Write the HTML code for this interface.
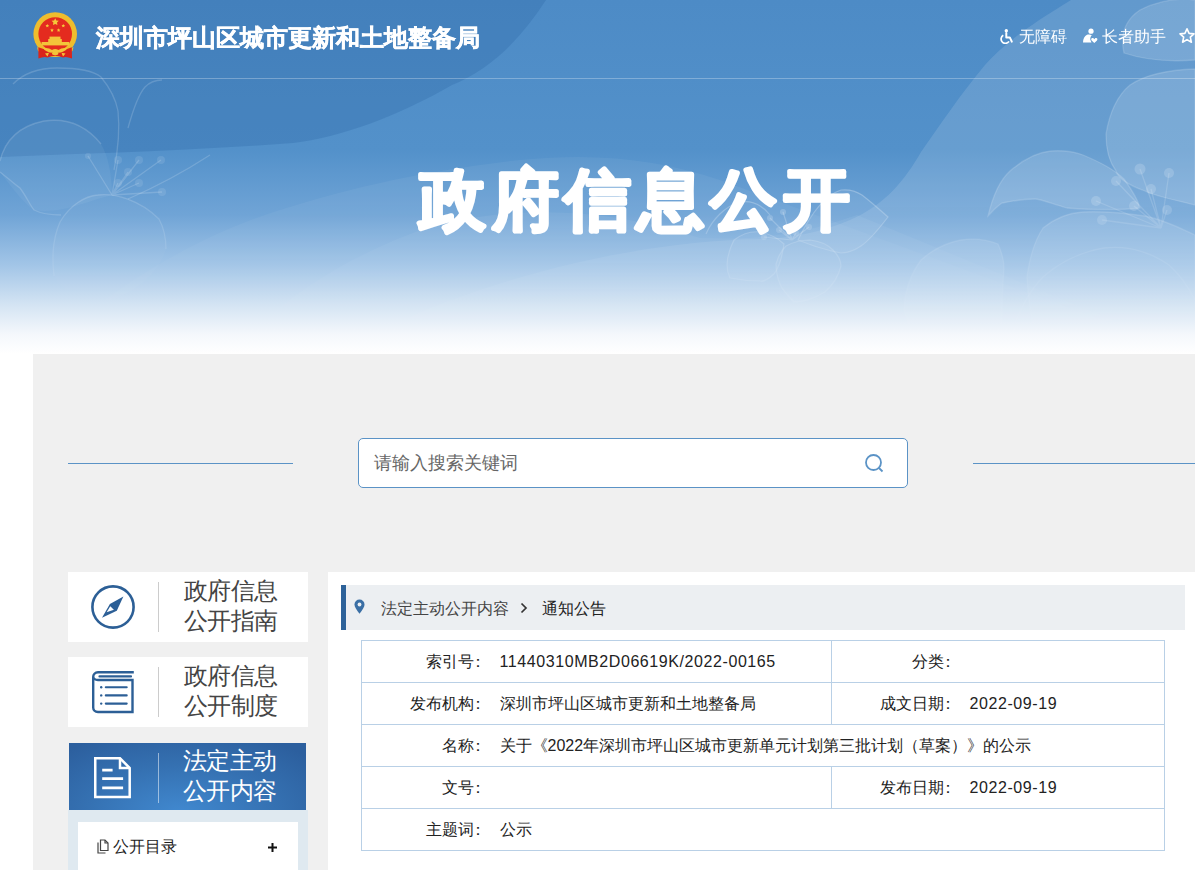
<!DOCTYPE html>
<html><head><meta charset="utf-8">
<style>
*{margin:0;padding:0;box-sizing:border-box}
html,body{width:1195px;height:870px;overflow:hidden;background:#fff;font-family:"Liberation Sans",sans-serif}
#hdr{position:absolute;left:0;top:0;width:1195px;height:354px;overflow:hidden}
#hdr svg.bgs{position:absolute;left:0;top:0}
.site{position:absolute;left:96px;top:22px;font-size:24px;font-weight:bold;color:#fff;-webkit-text-stroke:0.5px #fff;line-height:32px;white-space:nowrap}
.hline{position:absolute;left:0;top:78px;width:1195px;height:1px;background:rgba(255,255,255,.28)}
.tools{position:absolute;top:27px;left:1000px;color:#fff;font-size:16px;line-height:20px;white-space:nowrap}
.tools span{position:absolute;top:0}
.bigt{position:absolute;left:418px;top:150px;font-size:72px;font-weight:bold;color:#fff;line-height:100px;white-space:nowrap;letter-spacing:0px;-webkit-text-stroke:3px #fff}
#gray{position:absolute;left:33px;top:354px;width:1162px;height:516px;background:#f0f0f0}
.ln{position:absolute;height:1px;background:#5b93c6;top:463px}
.search{position:absolute;left:358px;top:438px;width:550px;height:50px;background:#fff;border:1px solid #5b93c6;border-radius:5px}
.search .ph{position:absolute;left:15px;top:13px;font-size:18px;line-height:22px;color:#666}
.card{position:absolute;left:68px;width:240px;height:70px;background:#fff}
.card .div{position:absolute;left:90px;top:10px;width:1px;height:50px;background:#ccc}
.card .tx{position:absolute;left:115.8px;top:4px;font-size:24px;line-height:30px;color:#444;letter-spacing:-0.6px}
.card.act{left:69px;width:237px;height:67px;background:radial-gradient(ellipse 170px 85px at 112px 70px,#4189d0 0%,#3571b2 55%,#2c5f9e 100%)}
.card.act .div{background:rgba(255,255,255,.5)}
.card.act .tx{color:#fff}
.sub{position:absolute;left:68px;top:810px;width:240px;height:60px;background:#dfe9f0}
.subin{position:absolute;left:78px;top:822px;width:220px;height:48px;background:#fff}
.subin .t{position:absolute;left:35px;top:15px;font-size:16px;line-height:20px;color:#222}
#main{position:absolute;left:328px;top:572px;width:867px;height:298px;background:#fff}
.bc{position:absolute;left:341px;top:585px;width:844px;height:45px;background:#eceff2;border-left:5px solid #2d6299}
.bc .t1{position:absolute;left:35px;top:14px;font-size:16px;line-height:20px;color:#444}
.bc .t2{position:absolute;left:196px;top:14px;font-size:16px;line-height:20px;color:#222}
table{position:absolute;left:361px;top:640px;width:804px;border-collapse:collapse;font-size:16px;color:#222}
.c{position:relative;left:-4px}
td{border:1px solid #b9d0e6;height:42px;line-height:20px;padding:0}
td.l{text-align:right;padding-right:10px;width:138px;border-right:none}
td.v{padding-left:0;border-left:none}
.n{letter-spacing:0.58px}
</style></head><body>
<div id="hdr">
<svg class="bgs" width="1195" height="354" viewBox="0 0 1195 354">
<defs>
<linearGradient id="bg" x1="0" y1="0" x2="0" y2="354" gradientUnits="userSpaceOnUse">
<stop offset="0.0000" stop-color="#4d8bc6"/>
<stop offset="0.4237" stop-color="#5391ca"/>
<stop offset="0.6073" stop-color="#70a4d6"/>
<stop offset="0.7486" stop-color="#a2c5e7"/>
<stop offset="0.8616" stop-color="#d4e4f3"/>
<stop offset="0.9463" stop-color="#f5f8fc"/>
<stop offset="1.0000" stop-color="#ffffff"/>
</linearGradient>
<linearGradient id="fade" x1="0" y1="0" x2="0" y2="354" gradientUnits="userSpaceOnUse">
<stop offset="0.0000" stop-color="#fff" stop-opacity="1"/>
<stop offset="0.5650" stop-color="#fff" stop-opacity="1"/>
<stop offset="0.9605" stop-color="#fff" stop-opacity="0"/>
</linearGradient>
<mask id="m"><rect width="1195" height="354" fill="url(#fade)"/></mask>
</defs>
<rect width="1195" height="354" fill="url(#bg)"/>
<g mask="url(#m)">
<path d="M0,0 L546,0 C520,40 490,70 452,85 C400,115 340,138 293,143 C200,150 100,153 0,157 Z" fill="#2f6aa8" opacity="0.32"/>
<path d="M1071,0 C1035,22 1005,42 985,65 C960,95 940,125 921,152 C905,180 885,205 850,220 C820,233 790,238 760,239 C700,240 600,250 480,290 C420,310 380,330 340,354 L1195,354 L1195,0 Z" fill="#ffffff" opacity="0.12"/>
<path d="M40,354 C120,280 200,235 280,210 C360,185 430,170 520,160 C600,152 660,160 720,180 L1195,354 Z" fill="#ffffff" opacity="0.05"/>
<path d="M230,354 C280,300 340,260 418,231 C500,205 600,205 700,238 C760,240 800,235 857,215 L1195,354 Z" fill="#ffffff" opacity="0.06"/>
<path d="M0,161 C5,140 20,126 44,121 C65,118 85,124 101,144 C108,155 112,175 112,195 C90,200 60,215 34,210 C20,200 8,182 0,172 Z" fill="#ffffff" fill-opacity="0.05"/>
<path d="M54,276 C52,260 52,240 60,222 C70,205 85,196 98,195 C115,193 140,200 159,219 C165,230 166,240 166,249 C160,270 140,290 110,300 C85,305 65,295 54,276 Z" fill="#ffffff" fill-opacity="0.04"/>
<g fill="none" stroke="#ffffff" stroke-opacity="0.16" stroke-width="1.3">
<path d="M13,84 C25,72 40,68 57,68 C80,68 95,72 101,77 C110,88 116,100 118,111 C120,130 118,150 114,170"/>
<path d="M128,128 C133,110 138,95 145,87 C150,82 156,80 162,80"/>
<path d="M0,161 C5,140 20,126 44,121 C65,118 85,124 101,144"/>
<path d="M0,172 C8,178 14,184 20,188 C26,196 30,205 34,210 C42,214 52,215 61,215"/>
<path d="M54,276 C52,260 52,240 60,222 C70,205 85,196 98,195 C115,193 140,200 159,219 C165,230 166,240 166,249"/>
<path d="M128,199 C160,185 190,168 210,155"/>
<path d="M112,195 L88,156 M112,195 L118,160 M112,195 L139,160 M112,195 L161,160 M112,195 L128,172 M112,195 L118,183 M112,195 L139,183 M112,195 L162,192"/>
</g>
<g fill="#ffffff" fill-opacity="0.1"><circle cx="118" cy="160" r="4"/><circle cx="139" cy="160" r="4"/><circle cx="161" cy="160" r="4"/><circle cx="128" cy="172" r="4"/><circle cx="118" cy="183" r="4"/><circle cx="139" cy="183" r="4"/><circle cx="162" cy="192" r="4"/><circle cx="88" cy="156" r="3"/></g>
<g fill="#ffffff" fill-opacity="0.08" stroke="#ffffff" stroke-opacity="0.25" stroke-width="1.2">
<path d="M798,240 C810,215 825,195 841,190 C850,189 856,191 862,195 C875,205 882,212 888,217 C878,230 870,240 861,246 C852,252 846,253 841,253 C825,250 810,245 798,240 Z"/>
<path d="M730,278 C725,268 726,256 734,240 C742,234 752,231 760,232 C770,234 778,238 784,244 C782,258 779,268 774,274 C768,280 762,282 760,281 C752,281 740,280 730,278 Z"/>
<path d="M786,246 C795,241 803,240 810,240 C820,241 828,245 833,250 C838,255 841,260 841,266 C838,278 832,286 825,292 C815,298 805,302 794,302 C788,296 782,290 780,284 C776,275 776,268 776,264 C778,256 782,250 786,246 Z"/>
<path d="M706,234 C712,220 725,206 740,202 C752,200 762,205 770,215" fill="none"/>
<path d="M792,240 L783,212 M792,240 L770,218 M792,240 L779,230 M792,240 L796,233 M792,240 L809,227 M792,240 L764,237" fill="none"/>
</g>
<g fill="#ffffff" fill-opacity="0.2"><circle cx="783" cy="212" r="3"/><circle cx="770" cy="218" r="3"/><circle cx="779" cy="230" r="3"/><circle cx="796" cy="233" r="3"/><circle cx="809" cy="227" r="3"/><circle cx="764" cy="237" r="3"/></g>
<g fill="#ffffff" fill-opacity="0.13" stroke="#ffffff" stroke-opacity="0.15" stroke-width="1.3">
<path d="M1124,53 C1120,35 1125,20 1140,10 C1160,0 1180,-2 1195,0 L1195,60 C1170,62 1145,60 1124,53 Z"/>
<path d="M1106,134 C1110,110 1118,95 1130,85 C1145,75 1165,70 1195,69 L1195,205 C1175,200 1155,196 1145,191 C1128,185 1118,178 1116,171 C1108,160 1106,148 1106,134 Z"/>
<path d="M988,216 C993,195 1000,180 1010,171 C1025,158 1040,152 1051,151 C1065,150 1075,152 1083,155 C1100,162 1115,170 1124,179 C1132,190 1138,200 1140,208 C1120,210 1095,210 1067,208 C1050,203 1040,199 1035,199 C1020,199 1008,202 1002,203 C996,207 992,212 988,216 Z"/>
<path d="M1027,277 C1030,255 1035,240 1043,228 C1055,218 1068,213 1083,212 C1105,211 1125,213 1145,216 C1165,220 1180,228 1195,235 L1195,354 L1040,354 C1033,330 1028,300 1027,277 Z"/>
<path d="M904,309 C905,290 912,272 921,260 C932,250 945,243 961,240 C975,238 988,240 998,244 C1003,255 1004,262 1004,269 C1002,290 1002,310 1002,326 C980,340 950,345 925,340 C912,332 906,320 904,309 Z"/>
<path d="M1014,326 C1022,305 1030,290 1043,277 C1060,262 1080,252 1104,248 C1130,245 1150,252 1169,265 C1180,275 1190,290 1195,300" fill="none"/>
<path d="M1161,228 L1140,169 M1161,228 L1169,173 M1161,228 L1116,181 M1161,228 L1151,189 M1161,228 L1096,201 M1161,228 L1134,206 M1161,228 L1167,210 M1161,228 L1102,220" fill="none"/>
</g>
<g fill="#ffffff" fill-opacity="0.16"><circle cx="1140" cy="169" r="5.5"/><circle cx="1169" cy="173" r="5"/><circle cx="1116" cy="181" r="5"/><circle cx="1151" cy="189" r="5"/><circle cx="1096" cy="201" r="5"/><circle cx="1134" cy="206" r="5"/><circle cx="1167" cy="210" r="5"/><circle cx="1102" cy="220" r="5"/></g>
</g>
</svg>
<div class="hline"></div>
<svg class="emb" style="position:absolute;left:0;top:0" width="100" height="70" viewBox="0 0 100 70">
<defs><path id="st" d="M0,-1 L0.294,-0.405 0.951,-0.309 0.476,0.155 0.588,0.809 0,0.5 -0.588,0.809 -0.476,0.155 -0.951,-0.309 -0.294,-0.405 Z"/></defs>
<circle cx="55.2" cy="34" r="21.8" fill="#efbd2e"/>
<circle cx="55.2" cy="34" r="16.8" fill="#e42b1f"/>
<use href="#st" transform="translate(55.2,22) scale(3.8)" fill="#f5c83a"/>
<use href="#st" transform="translate(47.3,25.8) scale(1.9)" fill="#f5c83a"/>
<use href="#st" transform="translate(52,30.2) scale(1.9)" fill="#f5c83a"/>
<use href="#st" transform="translate(58.6,30.2) scale(1.9)" fill="#f5c83a"/>
<use href="#st" transform="translate(63.3,25.8) scale(1.9)" fill="#f5c83a"/>
<rect x="49.5" y="36.6" width="11" height="2.6" fill="#f3c43a"/>
<rect x="48.2" y="39" width="13.6" height="3.2" fill="#f3c43a"/>
<rect x="41.6" y="42" width="27.6" height="3.4" fill="#f3c43a"/>
<path d="M37,47 Q55,60 73.5,47 L72.5,51 Q55,63 38,51 Z" fill="#efbd2e"/>
<path d="M38.4,47.2 L45,49.5 Q55,53 65.5,49.5 L71.8,47.2 L72,58.6 Q66,56 63,57.5 Q55,54 47.5,57.5 Q44,56 38.4,58.6 Z" fill="#d9241b"/>
<path d="M43,48.2 Q49,47.5 52,50 Q55,48 58.5,50 Q61.5,47.5 67.5,48.2 Q64,52.5 58,52.8 Q55,54 52.5,52.8 Q46.5,52.5 43,48.2 Z" fill="#f3c43a"/>
<path d="M45,53.5 L49,52.8 47.5,56.5 Z M65.5,53.5 L61.5,52.8 63,56.5 Z" fill="#f3c43a"/>
<ellipse cx="55.2" cy="53.6" rx="3.2" ry="1.6" fill="#f3c43a"/>
</svg>
<div class="site">深圳市坪山区城市更新和土地整备局</div>
<div class="tools"><span style="left:19px">无障碍</span><span style="left:102px">长者助手</span></div>
<svg style="position:absolute;left:999px;top:28px" width="16" height="16" viewBox="0 0 16 16">
<circle cx="7.3" cy="2.7" r="1.7" fill="#fff"/>
<path d="M7.3,5 V9.4 H10.8 L12.8,13.6" fill="none" stroke="#fff" stroke-width="2" stroke-linejoin="round" stroke-linecap="round"/>
<path d="M4.3,7.3 A4.3,4.3 0 1 0 10,13.4" fill="none" stroke="#fff" stroke-width="1.7"/>
</svg>
<svg style="position:absolute;left:1082px;top:28px" width="16" height="16" viewBox="0 0 16 16">
<circle cx="9" cy="3.2" r="2.6" fill="#fff"/>
<path d="M1,14.5 C1,11 2.5,8 5,6.8 C6.5,6.2 8.5,6.3 9.8,7.2 C8.5,8.5 8,10.3 8.4,12 L9.5,14.5 Z" fill="#fff"/>
<path d="M12.3,15 L9.6,12.4 C8.7,11.5 9.3,10.1 10.5,10.1 C11.3,10.1 11.8,10.6 12.3,11.2 C12.8,10.6 13.3,10.1 14.1,10.1 C15.3,10.1 15.9,11.5 15,12.4 Z" fill="#fff"/>
</svg>
<svg style="position:absolute;left:1178px;top:27px" width="18" height="18" viewBox="0 0 18 18">
<path d="M9,1.8 L11.1,6.4 16,6.9 12.3,10.2 13.4,15.2 9,12.6 4.6,15.2 5.7,10.2 2,6.9 6.9,6.4 Z" fill="none" stroke="#fff" stroke-width="1.6" stroke-linejoin="round"/>
</svg>
<svg class="bigs" style="position:absolute;left:0;top:0" width="1195" height="354"><text x="418.8" y="223.3" font-size="67" font-weight="bold" fill="#fff" stroke="#fff" stroke-width="3.2" stroke-linejoin="round" letter-spacing="5.8" style="font-family:'Liberation Sans',sans-serif">政府信息公开</text></svg>
</div>
<div id="gray"></div>
<div class="ln" style="left:68px;width:225px"></div>
<div class="ln" style="left:973px;width:222px"></div>
<div class="search"><div class="ph">请输入搜索关键词</div>
<svg style="position:absolute;left:505px;top:14px" width="22" height="22" viewBox="0 0 22 22"><circle cx="9.5" cy="9.5" r="7.5" fill="none" stroke="#5b93c6" stroke-width="1.8"/><line x1="15" y1="15" x2="18.5" y2="18.5" stroke="#5b93c6" stroke-width="1.8"/></svg>
</div>
<div class="card" style="top:572px"><svg style="position:absolute;left:0;top:0" width="90" height="70" viewBox="0 0 90 70">
<circle cx="45" cy="35" r="20.6" fill="none" stroke="#2c5f96" stroke-width="2.6"/>
<path d="M55.4,24.4 L48.8,38.8 L34,45.7 L41.9,31.9 Z" fill="#2c5f96"/>
<path d="M42.3,34.3 L45.9,37.8 L38.6,40.3 Z" fill="#fff"/>
</svg><div class="div"></div><div class="tx">政府信息<br>公开指南</div></div>
<div class="card" style="top:657px"><svg style="position:absolute;left:24px;top:14px" width="44" height="44" viewBox="0 0 44 44" fill="none" stroke="#2c5f96">
<path d="M41.8,1.3 H6 C3,1.3 1.2,3.5 1.2,6 V36.5 C1.2,39 3,41 6,41 H40.5 V9 H6 C3,9 1.2,7.3 1.2,5.5" stroke-width="2.4"/>
<path d="M7.5,5.4 H39" stroke-width="2.2" stroke-linecap="round"/>
<path d="M13.8,16.3 H34.7 M13.8,24.4 H34.7 M13.8,32.6 H34.7" stroke-width="2.1" stroke-linecap="round"/>
<circle cx="9.2" cy="16.3" r="1.2" fill="#2c5f96" stroke="none"/><circle cx="9.2" cy="24.4" r="1.2" fill="#2c5f96" stroke="none"/><circle cx="9.2" cy="32.6" r="1.2" fill="#2c5f96" stroke="none"/>
</svg><div class="div"></div><div class="tx">政府信息<br>公开制度</div></div>
<div class="card act" style="top:743px"><svg style="position:absolute;left:24.9px;top:13.7px" width="40" height="44" viewBox="0 0 40 44" fill="none" stroke="#fff" stroke-width="2.5">
<path d="M1.25,1.25 H26 L35.7,11 V40 H1.25 Z"/>
<path d="M26,1.25 V11 H35.7"/>
<path d="M8.2,13.2 H18.6 M8.2,21.6 H29.1 M8.2,30.8 H29.1" stroke-width="2.7"/>
</svg><div class="div" style="left:89px"></div><div class="tx" style="left:114px;top:3px">法定主动<br>公开内容</div></div>
<div class="sub"></div>
<div class="subin"><svg style="position:absolute;left:18px;top:17px" width="14" height="15" viewBox="0 0 14 15" fill="none" stroke="#444" stroke-width="1.2">
<path d="M4.5,1 H9 L12,4 V11.5 H4.5 Z"/><path d="M9,1 V4 H12"/><path d="M2,3.5 V14 H9.5"/>
</svg><div class="t">公开目录</div>
<svg style="position:absolute;left:189px;top:20px" width="11" height="11" viewBox="0 0 11 11"><path d="M5.5,1 V10 M1,5.5 H10" stroke="#111" stroke-width="2"/></svg></div>
<div id="main"></div>
<div class="bc"><svg style="position:absolute;left:8px;top:14px" width="13" height="16" viewBox="0 0 13 16">
<path d="M5.5,14.8 C2.5,10.8 0.5,8 0.5,5.6 A5,5 0 0 1 10.5,5.6 C10.5,8 8.5,10.8 5.5,14.8 Z" fill="#3a6fa5"/>
<circle cx="5.5" cy="5.5" r="1.9" fill="#eceff2"/>
</svg><svg style="position:absolute;left:173px;top:17px" width="10" height="12" viewBox="0 0 10 12"><path d="M2.5,1.5 L7,6 L2.5,10.5" fill="none" stroke="#333" stroke-width="1.7"/></svg><div class="t1">法定主动公开内容</div><div class="t2">通知公告</div></div>
<table>
<tr><td class="l">索引号<span class="c">：</span></td><td class="v" style="width:332px"><span class="n">11440310MB2D06619K/2022-00165</span></td><td class="l">分类<span class="c">：</span></td><td class="v"></td></tr>
<tr><td class="l">发布机构<span class="c">：</span></td><td class="v">深圳市坪山区城市更新和土地整备局</td><td class="l">成文日期<span class="c">：</span></td><td class="v"><span class="n">2022-09-19</span></td></tr>
<tr><td class="l">名称<span class="c">：</span></td><td class="v" colspan="3">关于《2022年深圳市坪山区城市更新单元计划第三批计划（草案）》的公示</td></tr>
<tr><td class="l">文号<span class="c">：</span></td><td class="v"></td><td class="l">发布日期<span class="c">：</span></td><td class="v"><span class="n">2022-09-19</span></td></tr>
<tr><td class="l">主题词<span class="c">：</span></td><td class="v" colspan="3">公示</td></tr>
</table>
</body></html>
